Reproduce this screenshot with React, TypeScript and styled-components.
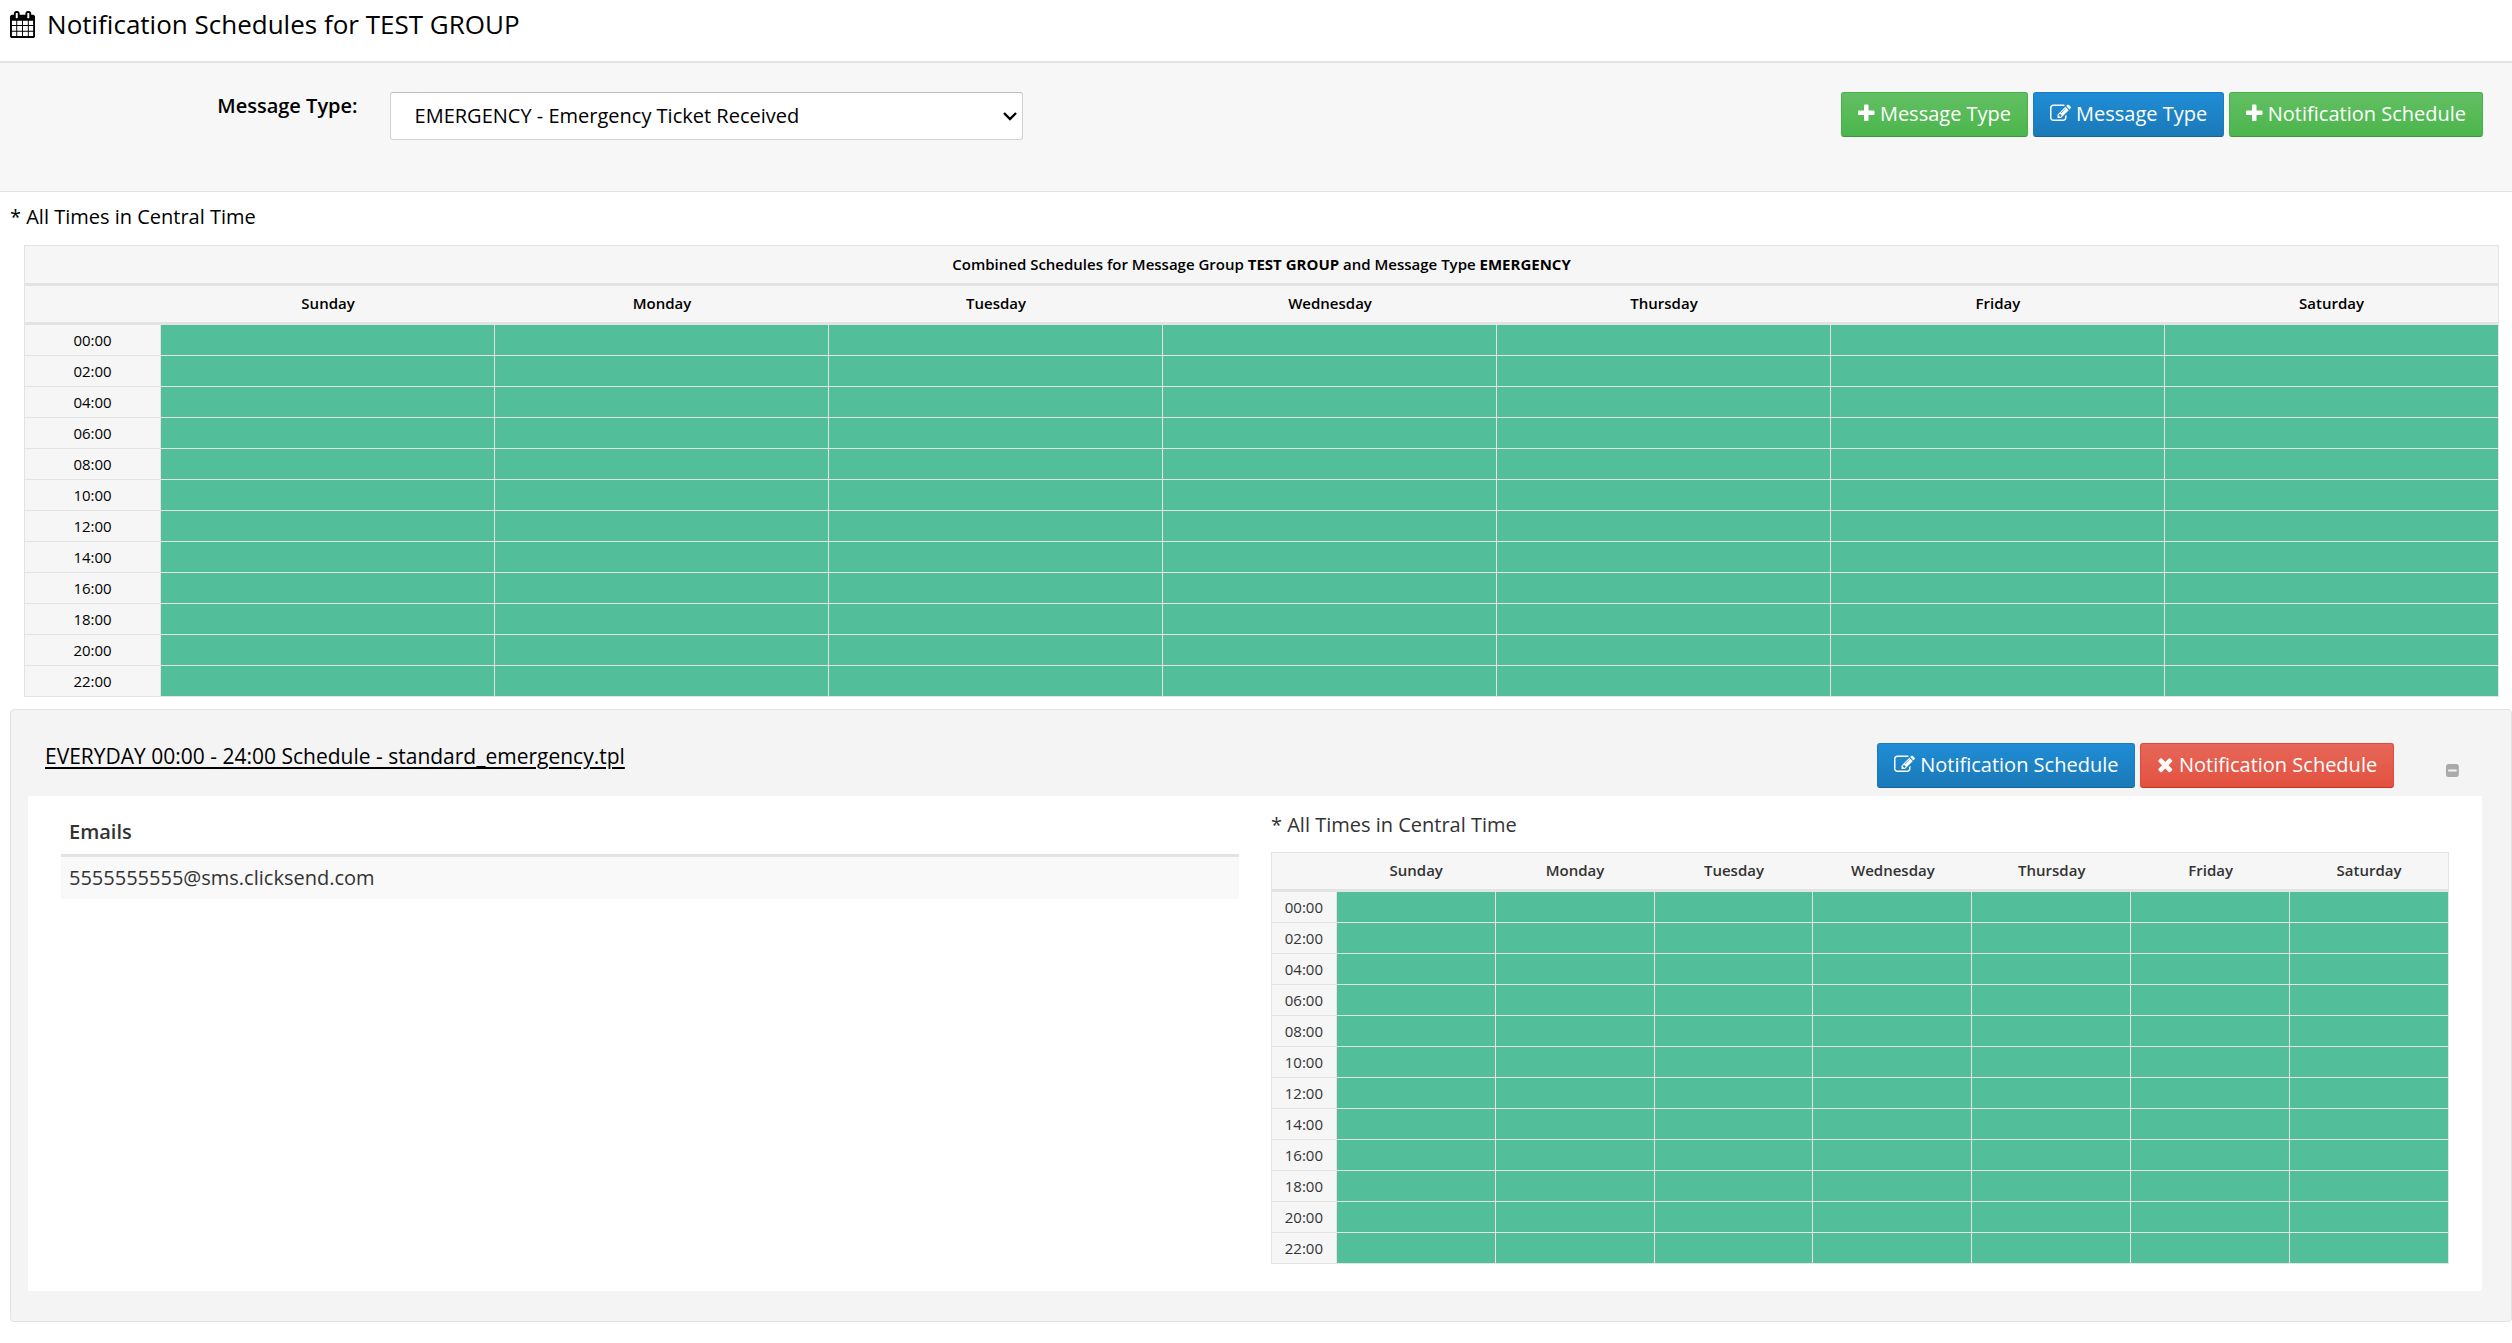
import React from "react";
import styled, { createGlobalStyle } from "styled-components";

const GlobalStyle = createGlobalStyle`
  *, *::before, *::after { box-sizing: border-box; }
  body {
    margin: 0;
    background: #fff;
    color: #000;
    font: 400 20px/30px "Open Sans", "Noto Sans", sans-serif;
  }
`;

const DAYS = ["Sunday", "Monday", "Tuesday", "Wednesday", "Thursday", "Friday", "Saturday"];
const HOURS = Array.from({ length: 12 }, (_, i) => `${String(i * 2).padStart(2, "0")}:00`);

/* ---------- icons ---------- */

const GLYPHS = {
  calendar: {
    box: [0, 1664],
    d: "M128 1664h288v-288h-288v288zm352 0h320v-288h-320v288zm-352-352h288v-320h-288v320zm352 0h320v-320h-320v320zm-352-384h288v-288h-288v288zm736 736h320v-288h-320v288zm-384-736h320v-288h-320v288zm768 736h288v-288h-288v288zm-384-352h320v-320h-320v320zm-352-864v-288q0-13-9.5-22.5t-22.5-9.5h-64q-13 0-22.5 9.5t-9.5 22.5v288q0 13 9.5 22.5t22.5 9.5h64q13 0 22.5-9.5t9.5-22.5zm736 864h288v-320h-288v320zm-384-384h320v-288h-320v288zm384 0h288v-288h-288v288zm32-480v-288q0-13-9.5-22.5t-22.5-9.5h-64q-13 0-22.5 9.5t-9.5 22.5v288q0 13 9.5 22.5t22.5 9.5h64q13 0 22.5-9.5t9.5-22.5zm384-64v1280q0 52-38 90t-90 38h-1408q-52 0-90-38t-38-90v-1280q0-52 38-90t90-38h128v-96q0-66 47-113t113-47h64q66 0 113 47t47 113v96h384v-96q0-66 47-113t113-47h64q66 0 113 47t47 113v96h128q52 0 90 38t38 90z",
  },
  plus: {
    box: [192, 1408],
    d: "M1600 736v192q0 40-28 68t-68 28h-416v416q0 40-28 68t-68 28h-192q-40 0-68-28t-28-68v-416h-416q-40 0-68-28t-28-68v-192q0-40 28-68t68-28h416v-416q0-40 28-68t68-28h192q40 0 68 28t28 68v416h416q40 0 68 28t28 68z",
  },
  edit: {
    box: [0, 1792],
    d: "M888 1184l116-116-152-152-116 116v56h96v96h56zm440-720q-16-16-33 1l-350 350q-17 17-1 33t33-1l350-350q17-17 1-33zm80 594v190q0 119-84.5 203.5t-203.5 84.5h-832q-119 0-203.5-84.5t-84.5-203.5v-832q0-119 84.5-203.5t203.5-84.5h832q63 0 117 25 15 7 18 23 3 17-9 29l-49 49q-14 14-32 8-23-6-45-6h-832q-66 0-113 47t-47 113v832q0 66 47 113t113 47h832q66 0 113-47t47-113v-126q0-13 9-22l64-64q15-15 35-7t20 29zm-96-738l288 288-672 672h-288v-288zm444 132l-92 92-288-288 92-92q28-28 68-28t68 28l152 152q28 28 28 68t-28 68z",
  },
  times: {
    box: [192, 1408],
    d: "M1490 1322q0 40-28 68l-136 136q-28 28-68 28t-68-28l-294-294-294 294q-28 28-68 28t-68-28l-136-136q-28-28-28-68t28-68l294-294-294-294q-28-28-28-68t28-68l136-136q28-28 68-28t68 28l294 294 294-294q28-28 68-28t68 28l136 136q28 28 28 68t-28 68l-294 294 294 294q28 28 28 68z",
  },
  minus: {
    box: [128, 1536],
    d: "M1408 960v-128q0-26-19-45t-45-19h-896q-26 0-45 19t-19 45v128q0 26 19 45t45 19h896q26 0 45-19t19-45zm256-544v960q0 119-84.5 203.5t-203.5 84.5h-960q-119 0-203.5-84.5t-84.5-203.5v-960q0-119 84.5-203.5t203.5-84.5h960q119 0 203.5 84.5t84.5 203.5z",
  },
};

const Glyph = styled.svg<{ $size: number }>`
  height: ${(p) => p.$size}px;
  width: auto;
  flex: none;
  fill: currentColor;
`;

function Icon({ name, size = 21 }: { name: keyof typeof GLYPHS; size?: number }) {
  const { box, d } = GLYPHS[name];
  return (
    <Glyph $size={size} viewBox={`${box[0]} 0 ${box[1]} 1792`} aria-hidden="true">
      <path d={d} />
    </Glyph>
  );
}

/* ---------- page header and toolbar ---------- */

const PageHeader = styled.header`
  display: flex;
  align-items: center;
  gap: 12px;
  padding: 6px 10px 19px;
  border-bottom: 2px solid #e3e3e3;
`;

const PageTitle = styled.h1`
  margin: 0;
  font-size: 26px;
  line-height: 36px;
  font-weight: 400;
`;

const Toolbar = styled.form`
  display: grid;
  grid-template-columns: 14.4% 25.5% 1fr;
  column-gap: 32px;
  align-items: start;
  padding: 28px 29px 51px 0;
  background: #f7f7f7;
  border-bottom: 1px solid #e3e3e3;
`;

const FieldLabel = styled.label`
  text-align: right;
  font-weight: 600;
`;

const SelectBox = styled.div`
  display: grid;
  align-items: center;
  margin-top: 1px;

  > * { grid-area: 1 / 1; }
`;

const TypeSelect = styled.select`
  appearance: none;
  width: 100%;
  height: 48px;
  padding: 0 30px 0 24px;
  border: 1px solid #d2d2d2;
  border-top-color: #bdbdbd;
  border-radius: 3px;
  background: #fff;
  color: #000;
  font: inherit;
`;

const Chevron = styled.svg`
  justify-self: end;
  width: 14px;
  height: 9px;
  margin-right: 6px;
  fill: none;
  stroke: #000;
  stroke-width: 2.4;
  pointer-events: none;
`;

const ButtonGroup = styled.div`
  display: flex;
  justify-content: flex-end;
  gap: 5px;
  margin-top: 1px;
`;

const TONES = {
  green: ["#62bf62", "#4cb64c", "#48b048", "#3d963d"],
  blue: ["#1f8dd6", "#1b79b7", "#1b7cbb", "#15639a"],
  red: ["#e66758", "#e35140", "#e04b39", "#c9301e"],
};

const Button = styled.button<{ $tone: keyof typeof TONES }>`
  display: inline-flex;
  align-items: center;
  gap: 5px;
  height: 45px;
  padding: 0 16px 2px;
  border: 1px solid ${(p) => TONES[p.$tone][2]};
  border-bottom-color: ${(p) => TONES[p.$tone][3]};
  border-radius: 3px;
  background: linear-gradient(${(p) => TONES[p.$tone][0]}, ${(p) => TONES[p.$tone][1]});
  color: #fff;
  font: inherit;
  white-space: nowrap;
  cursor: pointer;
`;

/* ---------- schedule grid ---------- */

const ZoneNote = styled.p`
  margin: 0;
`;

const GridTable = styled.table`
  width: 100%;
  table-layout: fixed;
  border-collapse: separate;
  border-spacing: 0;
  border: solid #e3e3e3;
  border-width: 1px 0 0 1px;
  background: #f6f6f6;
  font-size: 15px;
  line-height: 22px;
  text-align: center;
`;

const HourCol = styled.col`
  width: 5.5%;
`;

const TitleCell = styled.th`
  padding: 7px 5px 8px;
  border: solid #e3e3e3;
  border-width: 0 1px 3px 0;
  font-weight: 600;

  strong { font-weight: 700; }
`;

const DayCell = styled.th<{ $last?: boolean }>`
  padding: 6px 0 8px;
  border: solid #e3e3e3;
  border-width: 0 ${(p) => (p.$last ? 1 : 0)}px 3px 0;
  font-weight: 600;
`;

const HourCell = styled.th`
  padding: 4px 0;
  border: solid #e3e3e3;
  border-width: 0 1px 1px 0;
  font-weight: 400;
`;

const SlotCell = styled.td`
  padding: 0;
  border: solid #e3e3e3;
  border-width: 0 1px 1px 0;
  background: #52bf9a;
`;

function ScheduleGrid({ title }: { title?: React.ReactNode }) {
  return (
    <GridTable>
      <colgroup>
        <HourCol />
        {DAYS.map((d) => <col key={d} />)}
      </colgroup>
      <thead>
        {title && (
          <tr>
            <TitleCell colSpan={8}>{title}</TitleCell>
          </tr>
        )}
        <tr>
          <DayCell />
          {DAYS.map((d, i) => (
            <DayCell key={d} scope="col" $last={i === DAYS.length - 1}>{d}</DayCell>
          ))}
        </tr>
      </thead>
      <tbody>
        {HOURS.map((h) => (
          <tr key={h}>
            <HourCell scope="row">{h}</HourCell>
            {DAYS.map((d) => <SlotCell key={d} />)}
          </tr>
        ))}
      </tbody>
    </GridTable>
  );
}

const Combined = styled.section`
  padding: 10px 13px 12px 10px;

  ${GridTable} {
    width: calc(100% - 14px);
    margin: 13px 0 0 14px;
  }
`;

/* ---------- single schedule panel ---------- */

const Panel = styled.section`
  margin-left: 10px;
  padding: 32px 29px 30px 17px;
  border: 1px solid #e3e3e3;
  border-radius: 4px;
  background: #f4f4f4;
`;

const PanelHead = styled.div`
  display: flex;
  align-items: flex-start;
  padding: 0 23px 8px 17px;
`;

const ScheduleLink = styled.a`
  margin-right: auto;
  font-size: 21px;
  line-height: 28px;
  color: #000;
  text-decoration: underline 2px;
  text-underline-offset: 3px;
`;

const CollapseButton = styled.button`
  display: flex;
  margin-left: 52px;
  padding: 21px 0 0;
  border: 0;
  background: none;
  color: #aaa;
  cursor: pointer;
`;

const PanelBody = styled.div`
  display: grid;
  grid-template-columns: 1fr 1fr;
  column-gap: 32px;
  align-items: start;
  padding: 14px 33px 27px;
  background: #fff;
  color: #333;

  ${GridTable} { margin-top: 12px; }
`;

const EmailTable = styled.table`
  width: 100%;
  border-collapse: separate;
  border-spacing: 0;
  text-align: left;

  th {
    padding: 7px 8px;
    border-bottom: 3px solid #e3e3e3;
    font-weight: 600;
  }

  td {
    padding: 6px 8px;
    background: #f9f9f9;
  }
`;

export default function App() {
  return (
    <>
      <GlobalStyle />
      <PageHeader>
        <Icon name="calendar" size={27} />
        <PageTitle>Notification Schedules for TEST GROUP</PageTitle>
      </PageHeader>

      <Toolbar onSubmit={(e) => e.preventDefault()}>
        <FieldLabel htmlFor="message-type">Message Type:</FieldLabel>
        <SelectBox>
          <TypeSelect id="message-type">
            <option>EMERGENCY - Emergency Ticket Received</option>
          </TypeSelect>
          <Chevron viewBox="0 0 14 9" aria-hidden="true">
            <path d="M1 1l6 6 6-6" />
          </Chevron>
        </SelectBox>
        <ButtonGroup>
          <Button type="button" $tone="green"><Icon name="plus" />Message Type</Button>
          <Button type="button" $tone="blue"><Icon name="edit" />Message Type</Button>
          <Button type="button" $tone="green"><Icon name="plus" />Notification Schedule</Button>
        </ButtonGroup>
      </Toolbar>

      <main>
        <Combined>
          <ZoneNote>* All Times in Central Time</ZoneNote>
          <ScheduleGrid
            title={
              <>
                Combined Schedules for Message Group <strong>TEST GROUP</strong> and Message Type{" "}
                <strong>EMERGENCY</strong>
              </>
            }
          />
        </Combined>

        <Panel>
          <PanelHead>
            <ScheduleLink href="#schedule">
              EVERYDAY 00:00 - 24:00 Schedule - standard_emergency.tpl
            </ScheduleLink>
            <ButtonGroup>
              <Button type="button" $tone="blue"><Icon name="edit" />Notification Schedule</Button>
              <Button type="button" $tone="red"><Icon name="times" />Notification Schedule</Button>
            </ButtonGroup>
            <CollapseButton type="button" aria-label="Collapse">
              <Icon name="minus" size={15} />
            </CollapseButton>
          </PanelHead>
          <PanelBody id="schedule">
            <EmailTable>
              <thead>
                <tr><th scope="col">Emails</th></tr>
              </thead>
              <tbody>
                <tr><td>5555555555@sms.clicksend.com</td></tr>
              </tbody>
            </EmailTable>
            <div>
              <ZoneNote>* All Times in Central Time</ZoneNote>
              <ScheduleGrid />
            </div>
          </PanelBody>
        </Panel>
      </main>
    </>
  );
}
